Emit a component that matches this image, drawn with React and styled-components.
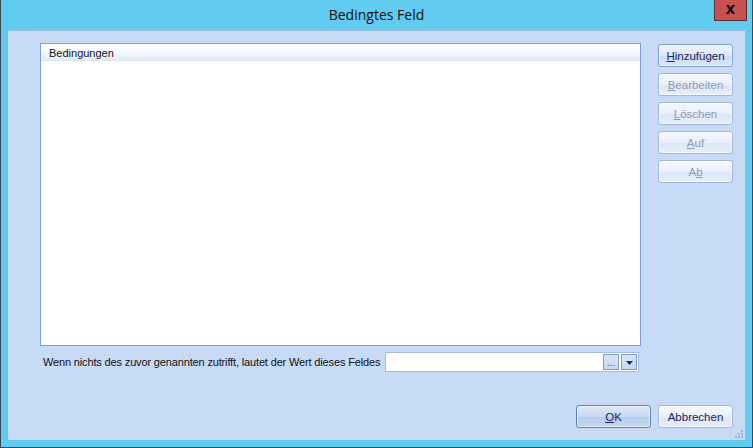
import React from "react";
import styled, { createGlobalStyle } from "styled-components";

const GlobalStyle = createGlobalStyle`
  html, body {
    margin: 0;
    padding: 0;
    background: #ffffff;
  }
  body {
    font-family: "Liberation Sans", Arial, sans-serif;
    font-size: 11px;
  }
`;

const actions = [
  { key: "H", rest: "inzufügen", primary: true },
  { key: "B", rest: "earbeiten", disabled: true },
  { key: "L", rest: "öschen", disabled: true },
  { key: "A", rest: "uf", disabled: true },
  { pre: "A", key: "b", rest: "", disabled: true },
];

const App = () => {
  return (
    <>
      <GlobalStyle />
      <Window>
        <TitleBar>
          <Title>Bedingtes Feld</Title>
          <CloseButton>X</CloseButton>
        </TitleBar>
        <Client>
          <TopRow>
            <ListView>
              <ListHeader>Bedingungen</ListHeader>
              <ListBody />
            </ListView>
            <SideButtons>
              {actions.map((a, i) => (
                <Button key={i} primary={a.primary} disabled={a.disabled}>
                  {a.pre}
                  <u>{a.key}</u>
                  {a.rest}
                </Button>
              ))}
            </SideButtons>
          </TopRow>
          <DefaultRow>
            <Label>Wenn nichts des zuvor genannten zutrifft, lautet der Wert dieses Feldes</Label>
            <ValueBox>
              <SmallButton>...</SmallButton>
              <SmallButton>
                <svg width="7" height="4" viewBox="0 0 7 4">
                  <path d="M0 0h7L3.5 4z" fill="#1c2c63" />
                </svg>
              </SmallButton>
            </ValueBox>
          </DefaultRow>
          <Footer>
            <Button isDefault>
              <u>O</u>K
            </Button>
            <Button>Abbrechen</Button>
          </Footer>
          <Grip>
            <svg width="8" height="8" viewBox="0 0 8 8">
              <g fill="#9fb3cf">
                <rect x="6" y="0" width="2" height="2" />
                <rect x="3" y="3" width="2" height="2" />
                <rect x="6" y="3" width="2" height="2" />
                <rect x="0" y="6" width="2" height="2" />
                <rect x="3" y="6" width="2" height="2" />
                <rect x="6" y="6" width="2" height="2" />
              </g>
            </svg>
          </Grip>
        </Client>
      </Window>
    </>
  );
};

export default App;

// Styled Components
const Window = styled.div`
  width: 753px;
  height: 448px;
  box-sizing: border-box;
  background: #62cbf0;
  border-left: 1px solid #3c4a55;
  border-right: 1px solid #3c4a55;
  border-bottom: 1px solid #3c4a55;
  display: flex;
  flex-direction: column;
`;

const TitleBar = styled.div`
  height: 30px;
  flex-shrink: 0;
  position: relative;
  display: flex;
  align-items: center;
  justify-content: center;
`;

const Title = styled.div`
  font-family: "Open Sans", "Noto Sans", sans-serif;
  font-size: 14px;
  color: #111;
  margin-top: -1px;
`;

const CloseButton = styled.div`
  position: absolute;
  top: 0;
  right: 5px;
  width: 33px;
  height: 21px;
  box-sizing: border-box;
  background: #c75050;
  border: 1px solid #5a2f2f;
  border-top: none;
  color: #000;
  font-family: "DejaVu Sans", sans-serif;
  font-weight: bold;
  font-size: 12px;
  display: flex;
  align-items: center;
  justify-content: center;
`;

const Client = styled.div`
  flex: 1;
  margin: 0 7px 7px 7px;
  background: #c7dbf6;
  border-top: 1px solid #93b7dc;
  box-sizing: border-box;
  padding: 12px 12px 12px 32px;
  display: flex;
  flex-direction: column;
  position: relative;
`;

const TopRow = styled.div`
  display: flex;
  gap: 17px;
`;

const ListView = styled.div`
  width: 601px;
  height: 303px;
  box-sizing: border-box;
  border: 1px solid #7d9fd3;
  background: #fff;
  display: flex;
  flex-direction: column;
`;

const ListHeader = styled.div`
  height: 17px;
  box-sizing: border-box;
  padding: 3px 0 0 8px;
  background: linear-gradient(#ffffff, #f3f7fd 60%, #e2ebf8);
  border-bottom: 1px solid #dbe6f5;
  color: #111;
  line-height: 12px;
`;

const ListBody = styled.div`
  flex: 1;
`;

const SideButtons = styled.div`
  display: flex;
  flex-direction: column;
  gap: 6px;
  margin-top: 1px;
`;

const Button = styled.div`
  width: 75px;
  height: 23px;
  box-sizing: border-box;
  border-radius: 3px;
  display: flex;
  align-items: center;
  justify-content: center;
  font-size: 11.5px;
  color: ${({ disabled }) => (disabled ? "#8e9cb3" : "#16245e")};
  border: 1px solid
    ${({ primary, isDefault }) =>
      isDefault ? "#5f82b4" : primary ? "#7f9fcc" : "#a3b8d6"};
  background: ${({ primary, isDefault }) =>
    isDefault
      ? "linear-gradient(#dbe7f8, #c9daf3 50%, #b6cdee 51%, #c3d6f1)"
      : primary
      ? "linear-gradient(#eef4fc, #dde8f8 50%, #cbdcf4 51%, #d8e5f7)"
      : "linear-gradient(#f4f8fd, #e9f0fa 50%, #dce6f5 51%, #e6eef9)"};
  box-shadow: inset 0 0 0 1px rgba(255, 255, 255, 0.6);

  u {
    text-decoration: underline;
  }
`;

const DefaultRow = styled.div`
  display: flex;
  align-items: center;
  margin: 6px 0 0 3px;
  width: 596px;
`;

const Label = styled.div`
  font-size: 11px;
  letter-spacing: -0.15px;
  color: #111;
  white-space: nowrap;
  margin-right: 5px;
`;

const ValueBox = styled.div`
  flex: 1;
  height: 20px;
  box-sizing: border-box;
  border: 1px solid #a3bce0;
  background: #fff;
  display: flex;
  justify-content: flex-end;
  align-items: stretch;
  gap: 2px;
  padding: 1px;
`;

const SmallButton = styled.div`
  width: 16px;
  box-sizing: border-box;
  border: 1px solid #7f9bc6;
  background: linear-gradient(#d8e5f7, #c6d8f2);
  color: #2f5fb0;
  font-size: 10px;
  display: flex;
  align-items: center;
  justify-content: center;
  line-height: 1;
  padding-top: 2px;
`;

const Footer = styled.div`
  margin-top: auto;
  display: flex;
  justify-content: flex-end;
  gap: 7px;
`;

const Grip = styled.div`
  position: absolute;
  right: 2px;
  bottom: 2px;
  width: 8px;
  height: 8px;
  display: flex;
`;
